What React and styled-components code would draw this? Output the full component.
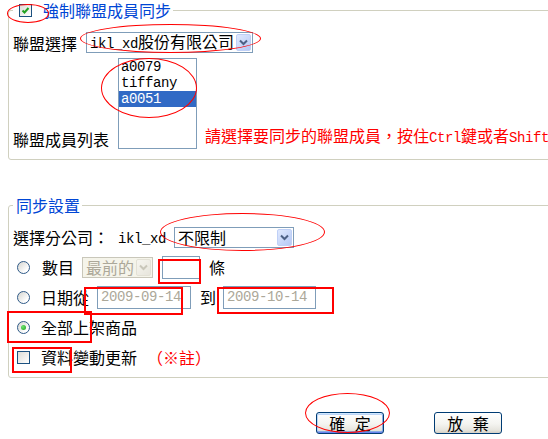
import styled, { createGlobalStyle } from "styled-components";

const GlobalStyle = createGlobalStyle`
  html, body {
    margin: 0;
    padding: 0;
    background: #fff;
    overflow: hidden;
  }
  body {
    font-family: "Noto Sans CJK TC", "Noto Sans", sans-serif;
    font-size: 16px;
    color: #000;
  }
`;

const Page = styled.div`
  position: relative;
  width: 548px;
  height: 439px;
  overflow: hidden;
  box-sizing: border-box;
  padding: 1px 0 0 8px;
`;

const Group = styled.fieldset`
  width: 600px;
  box-sizing: border-box;
  margin: ${(p) => p.$top || 0}px 0 0 0;
  padding: ${(p) => p.$pad};
  border: 1px solid #d0d0bf;
  border-radius: 3px;
  min-inline-size: 0;
`;

const Legend = styled.legend`
  display: flex;
  align-items: center;
  height: 19px;
  padding: 0 2px 0 3px;
  margin: 0;
  color: #0046d5;
  line-height: 19px;
`;

const Row = styled.div`
  display: flex;
  align-items: ${(p) => p.$align || "center"};
  height: ${(p) => p.$h || 30}px;
  margin-top: ${(p) => p.$gap || 0}px;
  white-space: nowrap;
`;

const Label = styled.span`
  line-height: 20px;
  margin-right: ${(p) => p.$mr || 0}px;
  margin-left: ${(p) => p.$ml || 0}px;
  margin-bottom: ${(p) => p.$pb || 0}px;
  color: ${(p) => p.$color || "#000"};
`;

const Mono = styled.span`
  font-family: "Liberation Mono", monospace;
  font-size: 14px;
  letter-spacing: -0.4px;
`;

const Combo = styled.div`
  display: flex;
  align-items: center;
  justify-content: space-between;
  width: ${(p) => p.$w}px;
  height: 21px;
  box-sizing: border-box;
  padding: 0 1px 0 3px;
  margin-right: ${(p) => p.$mr || 0}px;
  border: 1px solid ${(p) => (p.$disabled ? "#c9c7ba" : "#7f9db9")};
  background: ${(p) => (p.$disabled ? "#f5f4ea" : "#fff")};
  color: ${(p) => (p.$disabled ? "#aca899" : "#000")};
`;

const ComboText = styled.span`
  line-height: 19px;
  white-space: nowrap;
`;

const ArrowBtn = styled.span`
  flex: none;
  display: flex;
  align-items: center;
  justify-content: center;
  width: 15px;
  height: 17px;
  box-sizing: border-box;
  border-radius: 2px;
  border: 1px solid ${(p) => (p.$disabled ? "#e3e1d6" : "#bfd0f7")};
  background: ${(p) =>
    p.$disabled
      ? "linear-gradient(135deg, #f7f6f0, #e7e5dc)"
      : "linear-gradient(135deg, #e0e9fe, #b6c9f5)"};
`;

const ListBox = styled.div`
  width: 79px;
  height: 91px;
  box-sizing: border-box;
  border: 1px solid #7f9db9;
  background: #fff;
  margin-right: 8px;
`;

const Option = styled.div`
  height: 16px;
  line-height: 16px;
  padding-left: 2px;
  font-family: "Liberation Mono", monospace;
  font-size: 14px;
  letter-spacing: -0.4px;
  background: ${(p) => (p.$selected ? "#316ac5" : "transparent")};
  color: ${(p) => (p.$selected ? "#fff" : "#000")};
`;

const TextBox = styled.div`
  display: flex;
  align-items: center;
  width: ${(p) => p.$w}px;
  height: 23px;
  box-sizing: border-box;
  padding-left: 3px;
  margin-right: ${(p) => p.$mr || 0}px;
  border: 1px solid #7f9db9;
  background: #fff;
  color: #aca899;
  font-family: "Liberation Mono", monospace;
  font-size: 14px;
  letter-spacing: -0.4px;
`;

const Check = styled.span`
  flex: none;
  display: flex;
  align-items: center;
  justify-content: center;
  width: 13px;
  height: 13px;
  box-sizing: border-box;
  margin: 0 ${(p) => p.$mr}px 0 ${(p) => p.$ml}px;
  border: 1px solid #1c5180;
  background: linear-gradient(135deg, #dcdcd7, #ffffff);
`;

const Radio = styled.span`
  flex: none;
  display: flex;
  align-items: center;
  justify-content: center;
  width: 13px;
  height: 13px;
  box-sizing: border-box;
  margin: 0 11px 0 4px;
  border-radius: 50%;
  border: 1px solid #2f5a88;
  background: linear-gradient(135deg, #d4d4cf, #ffffff 75%);

  &::after {
    content: "";
    display: ${(p) => (p.$checked ? "block" : "none")};
    width: 5px;
    height: 5px;
    border-radius: 50%;
    background: radial-gradient(circle at 35% 35%, #6ee46e, #21a121);
  }
`;

const ButtonBar = styled.div`
  display: flex;
  gap: 50px;
  margin-top: 34px;
  padding-left: 308px;
`;

const Button = styled.button`
  width: 68px;
  height: 22px;
  padding: 0;
  border: 1px solid #003c74;
  border-radius: 3px;
  font-family: "Noto Sans CJK TC", sans-serif;
  font-size: 16px;
  line-height: 18px;
  word-spacing: 6px;
  color: #000;
  background: linear-gradient(180deg, #ffffff 0%, #f4f4f0 55%, #e6e5de 85%, #d6d0c5 100%);
  box-shadow: ${(p) =>
    p.$focused
      ? "inset 0 1px 0 #cee7ff, inset 0 -1px 0 #6982ee, inset 1px 0 0 #bcd4f6, inset -1px 0 0 #89ade4, inset 0 2px 0 #bcd4f6, inset 0 -2px 0 #89ade4"
      : "none"};
`;

const Mark = styled.span`
  position: absolute;
  left: ${(p) => p.$x}px;
  top: ${(p) => p.$y}px;
  width: ${(p) => p.$w}px;
  height: ${(p) => p.$h}px;
  box-sizing: border-box;
  border: ${(p) => (p.$oval ? "1px" : "2px")} solid #ff0000;
  border-radius: ${(p) => (p.$oval ? "50%" : "0")};
  pointer-events: none;
`;

function Chevron({ disabled }) {
  return (
    <svg width="9" height="7" viewBox="0 0 9 7">
      <path
        d="M1 1.5 L4.5 5 L8 1.5"
        fill="none"
        stroke={disabled ? "#c9c7ba" : "#4d6185"}
        strokeWidth="2"
      />
    </svg>
  );
}

function Tick() {
  return (
    <svg width="9" height="9" viewBox="0 0 9 9">
      <path d="M1.5 4.5 L3.5 6.5 L7.5 2" fill="none" stroke="#21a121" strokeWidth="2" />
    </svg>
  );
}

const marks = [
  { x: 7, y: 4, w: 42, h: 19, oval: true },
  { x: 80, y: 24, w: 181, h: 29, oval: true },
  { x: 101, y: 58, w: 96, h: 60, oval: true },
  { x: 160, y: 213, w: 165, h: 38, oval: true },
  { x: 305, y: 393, w: 85, h: 40, oval: true },
  { x: 158, y: 259, w: 43, h: 25 },
  { x: 84, y: 287, w: 99, h: 28 },
  { x: 217, y: 287, w: 117, h: 27 },
  { x: 7, y: 311, w: 85, h: 32 },
  { x: 12, y: 347, w: 60, h: 26 },
];

export default function App() {
  return (
    <Page>
      <GlobalStyle />

      <Group $pad="12px 4px 10px 4px">
        <Legend>
          <Check $ml={3} $mr={11}>
            <Tick />
          </Check>
          強制聯盟成員同步
        </Legend>

        <Row $h={21}>
          <Label $mr={9}>聯盟選擇</Label>
          <Combo $w={167}>
            <ComboText>
              <Mono>ikl_xd</Mono>股份有限公司
            </ComboText>
            <ArrowBtn>
              <Chevron />
            </ArrowBtn>
          </Combo>
        </Row>

        <Row $h={91} $gap={5} $align="flex-end">
          <Label $mr={9}>聯盟成員列表</Label>
          <ListBox>
            <Option>a0079</Option>
            <Option>tiffany</Option>
            <Option $selected>a0051</Option>
          </ListBox>
          <Label $color="#ff0000" $pb={1}>
            請選擇要同步的聯盟成員，按住<Mono>Ctrl</Mono>鍵或者<Mono>Shift</Mono>
          </Label>
        </Row>
      </Group>

      <Group $top={36} $pad="7px 4px 5px 4px">
        <Legend>同步設置</Legend>

        <Row>
          <Label $mr={9}>選擇分公司：</Label>
          <Label $mr={8}>
            <Mono>ikl_xd</Mono>
          </Label>
          <Combo $w={120}>
            <ComboText>不限制</ComboText>
            <ArrowBtn>
              <Chevron />
            </ArrowBtn>
          </Combo>
        </Row>

        <Row>
          <Radio />
          <Label $ml={1} $mr={8}>數目</Label>
          <Combo $w={71} $disabled $mr={9}>
            <ComboText>最前的</ComboText>
            <ArrowBtn $disabled>
              <Chevron disabled />
            </ArrowBtn>
          </Combo>
          <TextBox $w={38} $mr={9} />
          <Label>條</Label>
        </Row>

        <Row>
          <Radio />
          <Label $mr={8}>日期從</Label>
          <TextBox $w={94} $mr={9}>2009-09-14</TextBox>
          <Label $mr={7}>到</Label>
          <TextBox $w={93}>2009-10-14</TextBox>
        </Row>

        <Row>
          <Radio $checked />
          <Label>全部上架商品</Label>
        </Row>

        <Row>
          <Check $ml={4} $mr={11} />
          <Label $mr={10}>資料變動更新</Label>
          <Label $color="#ff0000">（※註）</Label>
        </Row>
      </Group>

      <ButtonBar>
        <Button $focused>確 定</Button>
        <Button>放 棄</Button>
      </ButtonBar>

      {marks.map((m, i) => (
        <Mark key={i} $x={m.x} $y={m.y} $w={m.w} $h={m.h} $oval={m.oval} />
      ))}
    </Page>
  );
}
